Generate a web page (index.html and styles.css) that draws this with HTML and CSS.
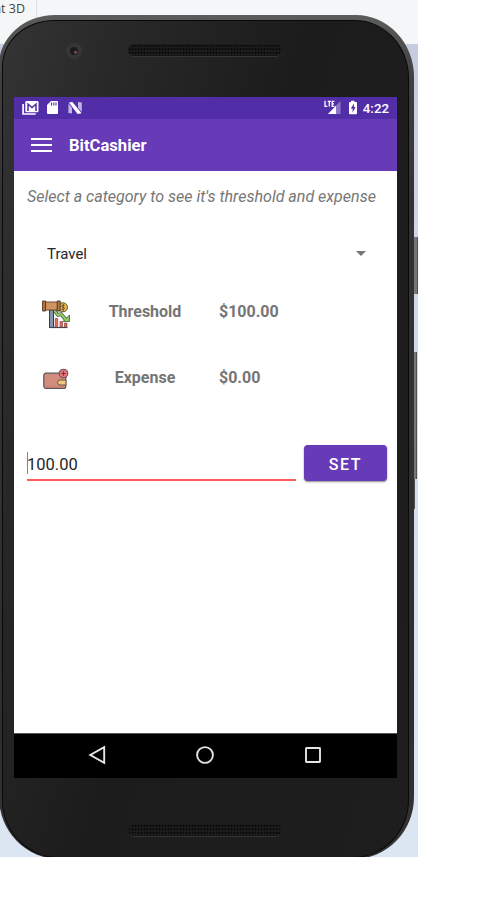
FILE: index.html
```html
<!DOCTYPE html>
<html lang="en">
<head>
<meta charset="utf-8">
<title>BitCashier</title>
<link rel="stylesheet" href="styles.css">
</head>
<body>
<div class="desktop">
  <div class="toolbar"><span class="tab">nt 3D</span></div>
  <i class="key power"></i>
  <i class="key volume"></i>
  <i class="key lower"></i>
  <div class="phone">
    <div class="body">
      <div class="bezel top"><i class="camera"></i><i class="speaker"></i></div>
      <div class="screen">
        <div class="status">
          <svg class="notices" width="64" height="16" viewBox="0 0 64 16">
            <path d="M1.1 4v10h12.600" fill="none" stroke="#fff" stroke-width="1.700"/>
            <rect x="3.300" y="1" width="13.200" height="11.300" rx="1.300" fill="#fff"/>
            <path d="M6 11V4.200l4 3.400 4-3.400V11" fill="none" stroke="#512da8" stroke-width="1.500"/>
            <path d="M29 1h6q1 0 1 1v11q0 1-1 1h-9q-1 0-1-1V5z" fill="#fff"/>
            <path d="M29.500 2.500v3M31.800 2.500v3M34 2.500v3" stroke="#512da8" stroke-width="1.100"/>
            <path d="M46.400 3.500v9.600l3.600.5V8zM59.800 2.500v9.600l-3.800-4.300V2z" fill="#fff" fill-opacity=".65"/>
            <path d="M46.800 2.500l3.600-.5 9.200 11.300-4 .7z" fill="#fff"/>
          </svg>
          <div class="status-right">
            <svg width="33" height="16" viewBox="0 0 33 16">
              <path d="M1 .7v5.600h2.400M3.700 1.300h3.200M5.300 1.300v5.300M10.400 1.300H8.200v5h2.200M8.200 3.800H10" fill="none" stroke="#fff" stroke-width="1.300"/>
              <path d="M16.500 1v13H4z" fill="#fff" fill-opacity=".35"/>
              <path d="M12 5.700V14H4z" fill="#fff"/>
              <path d="M27 .7h3.500V2H32q1 0 1 1v10.200q0 1-1 1h-6q-1 0-1-1V3q0-1 1-1h1z" fill="#fff"/>
              <path d="M30 3.500l-3.300 5h1.900v3.900l3-5.300h-1.800z" fill="#512da8"/>
            </svg>
            <span class="clock">4:22</span>
          </div>
        </div>
        <div class="appbar"><div class="menu"><i></i><i></i><i></i></div><h1>BitCashier</h1></div>
        <div class="content">
          <p class="hint">Select a category to see it's threshold and expense</p>
          <div class="select"><span>Travel</span><i class="arrow"></i></div>
          <div class="row">
            <svg width="28" height="30" viewBox="0 0 28 30">
              <circle cx="21" cy="8.300" r="4.500" fill="#f0bd45" stroke="#5f5136"/>
              <path d="M22.700 6.500q-3-1-3 .6 0 1 1.500 1.200 1.600.3 1.300 1.400-.6 1.200-3 .4M21.200 5v7" fill="none" stroke="#59492a" stroke-width=".9"/>
              <path d="M12 11l4 5 3-1 6 7" fill="none" stroke="#46563e" stroke-width="3.600"/>
              <path d="M21 22.500h6.500V16z" fill="#8bc75c" stroke="#46563e" stroke-width=".8"/>
              <path d="M12 11l4 5 3-1 6 7" fill="none" stroke="#96cc67" stroke-width="2"/>
              <rect x="7.500" y="11" width="4" height="17.500" fill="#8394a5" stroke="#333e49"/>
              <path d="M8 28.500h17.500" stroke="#3e464f" stroke-width="1.200"/>
              <path d="M13.200 19.500h2.500v8.500h-2.500zM18 22.500h2.500V28H18zM22.500 24H25v4h-2.500z" fill="#ef6559" stroke="#773c3a" stroke-width=".6"/>
              <rect x="3.500" y="3" width="12" height="8" fill="#ce9560" stroke="#6e4c30"/>
              <path d="M.6 2h3v10h-3zM15.200 2h3v10h-3z" fill="#b97540" stroke="#523a29"/>
            </svg>
            <b class="label">Threshold</b><b class="amount">$100.00</b>
          </div>
          <div class="row second">
            <svg width="28" height="30" viewBox="0 0 28 30">
              <rect x="1.800" y="8.200" width="22" height="15.300" rx="2.200" fill="#d38d7c" stroke="#59545a" stroke-width="1.200"/>
              <path d="M3.500 22h19" stroke="#b9776c"/>
              <path d="M24 15h-5.500q-3 0-3 2.500t3 2.500H24z" fill="#f1c779" stroke="#66564d"/>
              <circle cx="21.500" cy="8.500" r="4.300" fill="#ed737a" stroke="#69515b" stroke-width="1.100"/>
              <path d="M21.500 6.200v4.600M19.200 8.500h4.600" stroke="#633f49" stroke-width="1.100"/>
            </svg>
            <b class="label">Expense</b><b class="amount">$0.00</b>
          </div>
          <div class="entry"><div class="field">100.00</div><button>SET</button></div>
        </div>
        <div class="nav">
          <svg width="20" height="20" viewBox="0 0 20 20"><path d="M17.200 2.200v15.600L3.300 10z"/></svg>
          <svg width="20" height="20" viewBox="0 0 20 20"><circle cx="10" cy="10" r="7.900"/></svg>
          <svg width="20" height="20" viewBox="0 0 20 20"><rect x="3" y="3" width="14" height="14" rx=".5"/></svg>
        </div>
      </div>
      <div class="bezel bottom"><i class="speaker"></i></div>
    </div>
  </div>
</div>
</body>
</html>
```
FILE: styles.css
```css
* { box-sizing: border-box; }
body { margin: 0; background: #fff; font-family: Roboto, sans-serif; }
.desktop {
  position: relative;
  width: 418px;
  height: 857px;
  overflow: hidden;
  background: linear-gradient(#c5cce0 44px, #d0d9e9 300px, #dce6f3 800px);
}
.toolbar { height: 44px; margin-bottom: -29px; background: #f5f6f8; }
.tab {
  display: flex;
  justify-content: flex-end;
  width: 37px;
  height: 18px;
  padding-right: 11px;
  overflow: hidden;
  white-space: nowrap;
  border-right: 1px solid #dedfe1;
  font: 12.500px/17px "Open Sans", sans-serif;
  color: #444;
}
.phone {
  position: relative;
  width: 415px;
  height: 844px;
  margin-left: -1px;
  padding: 5px 5px 1px 3px;
  border-radius: 56px 58px 60px 60px / 50px 62px 62px 62px;
  background: linear-gradient(#5b5d5b, #414141 60px, #353233 180px, #302d2e 700px, #353333);
}
.body {
  height: 838px;
  padding: 0 12px;
  border: 1px solid #090909;
  border-radius: 52px 54px 56px 56px / 46px 58px 58px 58px;
  background: linear-gradient(105deg, #343434, #292929 18%, #1c1c1c 48%, #1e1e1e);
}
.key { position: absolute; border-right: 1px solid #524e4e; background: #777; }
.power { left: 414px; top: 237px; width: 4px; height: 57px; }
.volume { left: 414px; top: 352px; width: 3px; height: 127px; }
.lower { left: 413px; top: 479px; width: 2px; height: 30px; background: #444; }
.bezel { position: relative; display: flex; justify-content: center; padding-right: 1px; }
.top { height: 76px; padding-top: 23px; }
.bottom { padding-top: 46px; }
.speaker {
  width: 154px;
  height: 13px;
  border-radius: 7px;
  border-bottom: 1px solid #363636;
  background: radial-gradient(circle, #050505 0 .8px, transparent 1.200px) 0 0 / 3px 3.500px, #1c1c1c;
}
.camera {
  position: absolute;
  left: 51px;
  top: 22px;
  width: 16px;
  height: 16px;
  border: 4px solid #363636;
  border-radius: 50%;
  background: radial-gradient(circle at 70% 65%, #725055 0 1px, #1c1a20 2px);
}
.screen { width: 383px; height: 681px; margin-left: -1px; display: flex; flex-direction: column; background: #fff; }
.status {
  height: 22px;
  display: flex;
  justify-content: space-between;
  align-items: center;
  padding: 0 8px;
  background: #512da8;
  color: #fff;
}
.status svg { display: block; }
.status-right { display: flex; align-items: center; gap: 7px; }
.status-right svg { margin-right: -1px; }
.clock { margin-top: 1px; font-size: 13.300px; font-weight: 500; line-height: 22px; }
.appbar { height: 52px; display: flex; align-items: center; padding-left: 17px; background: #673ab7; color: #fff; }
.menu { display: flex; flex-direction: column; gap: 4px; width: 21px; margin-right: 17px; }
.menu i { height: 2.300px; background: #fff; }
h1 { margin: 2px 0 0; font-size: 16.600px; line-height: 22px; font-weight: 700; }
.content { flex: 1; padding: 15px 10px 0 13px; }
.hint { margin: 0; font-size: 16.050px; line-height: 22px; font-style: italic; color: #767676; white-space: nowrap; }
.select {
  display: flex;
  align-items: center;
  justify-content: space-between;
  height: 22px;
  margin-top: 35px;
  padding: 0 21px 0 20px;
  font-size: 15px;
  color: #272727;
}
.arrow { margin-top: -2px; border: 5px solid transparent; border-top-color: #757575; border-bottom: 0; }
.row { display: flex; align-items: center; height: 30px; margin-top: 34px; padding-left: 15px; color: #757575; font-size: 16px; }
.row.second { margin-top: 36px; }
.row svg { flex: none; }
.label { width: 104px; margin: -5px 0 0 23px; text-align: center; }
.amount { margin: -5px 0 0 22px; }
.entry { display: flex; align-items: flex-start; gap: 8px; margin-top: 50px; }
.field {
  width: 269px;
  height: 36px;
  border-bottom: 2px solid #ff5c5c;
  background: linear-gradient(#ff5252, #ff5252) 0 7px / 1px 22px no-repeat;
  font-size: 16.500px;
  line-height: 39px;
  color: #272727;
}
button {
  flex: none;
  width: 83px;
  height: 36px;
  border: 0;
  border-radius: 4px;
  background: #673ab7;
  box-shadow: 0 1px 2px #0007;
  color: #fff;
  font: 500 16px/39px Roboto, sans-serif;
  letter-spacing: 1.600px;
  padding: 0;
}
.nav { height: 45px; display: flex; align-items: center; justify-content: space-between; padding: 0 74px 2px 73px; border-top: 1px solid #555; background: #000; }
.nav svg { fill: none; stroke: #e5e5e5; stroke-width: 1.900; }
```
